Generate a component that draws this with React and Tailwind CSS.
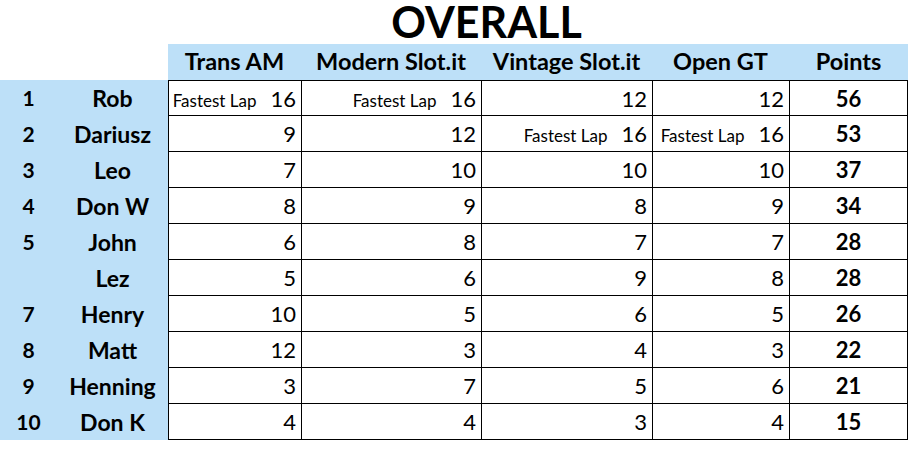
import React from 'react';

const rows = [
  { rank: '1', name: 'Rob', scores: [[16, true], [16, true], [12], [12]], points: 56 },
  { rank: '2', name: 'Dariusz', scores: [[9], [12], [16, true], [16, true]], points: 53 },
  { rank: '3', name: 'Leo', scores: [[7], [10], [10], [10]], points: 37 },
  { rank: '4', name: 'Don W', scores: [[8], [9], [8], [9]], points: 34 },
  { rank: '5', name: 'John', scores: [[6], [8], [7], [7]], points: 28 },
  { rank: '', name: 'Lez', scores: [[5], [6], [9], [8]], points: 28 },
  { rank: '7', name: 'Henry', scores: [[10], [5], [6], [5]], points: 26 },
  { rank: '8', name: 'Matt', scores: [[12], [3], [4], [3]], points: 22 },
  { rank: '9', name: 'Henning', scores: [[3], [7], [5], [6]], points: 21 },
  { rank: '10', name: 'Don K', scores: [[4], [4], [3], [4]], points: 15 },
];

const headers = ['Trans AM', 'Modern Slot.it', 'Vintage Slot.it', 'Open GT', 'Points'];
const colWidths = ['w-[133px]', 'w-[180px]', 'w-[171px]', 'w-[137px]'];

const App = () => {
  return (
    <div className="w-[914px] h-[449px] bg-white text-black overflow-hidden font-['Lato',sans-serif]">
      {/* title */}
      <div className="flex h-[44px] w-[908px] justify-center pl-[65px]">
        <h1 className="text-[43px] font-bold leading-[44px]">OVERALL</h1>
      </div>

      {/* header band */}
      <div className="flex h-[36px] w-[908px]">
        <div className="w-[168px]" />
        <div className="flex flex-1 items-center bg-[#bde0f8] text-[23.5px] font-bold">
          {headers.map((h, i) => (
            <div
              key={h}
              className={`text-center ${i < 4 ? colWidths[i] : 'w-[119px]'}`}
            >
              {h}
            </div>
          ))}
        </div>
      </div>

      {/* body */}
      <div className="w-[908px]">
        {rows.map((r, ri) => (
          <div key={r.name} className="flex h-[36px]">
            <div className="flex w-[168px] items-center bg-[#bde0f8] font-bold">
              <div className="w-[57px] text-center text-[21px]">{r.rank}</div>
              <div className="w-[111px] text-center text-[23px]">{r.name}</div>
            </div>
            {r.scores.map(([v, fast], ci) => (
              <div
                key={ci}
                className={`flex items-center justify-end border-l border-b border-black pr-[5px] ${colWidths[ci]} ${ri === 0 ? 'border-t' : ''}`}
              >
                <div className="flex items-baseline gap-[14px]">
                  {fast && <span className="text-[17px]">Fastest Lap</span>}
                  <span className="text-[22px]">{v}</span>
                </div>
              </div>
            ))}
            <div
              className={`flex w-[119px] items-center justify-center border-x border-b border-black text-[22px] font-bold ${ri === 0 ? 'border-t' : ''}`}
            >
              {r.points}
            </div>
          </div>
        ))}
      </div>
    </div>
  );
};

export default App;
